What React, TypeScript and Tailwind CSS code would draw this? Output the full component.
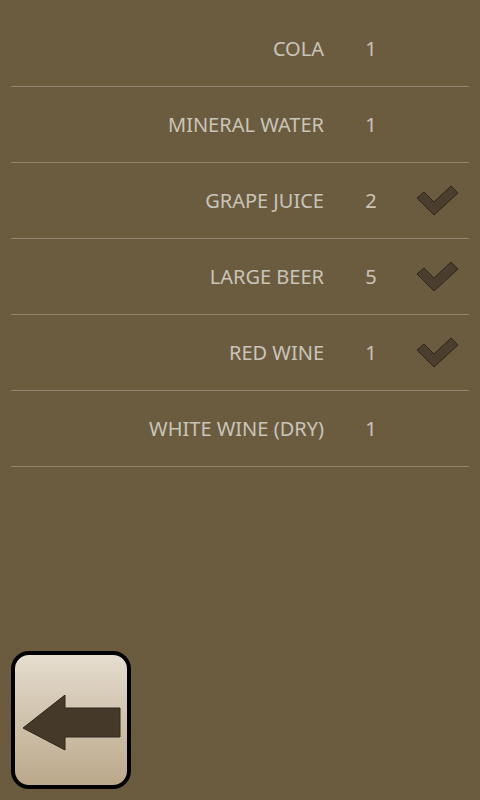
const items = [
  { name: "COLA", qty: 1, done: false },
  { name: "MINERAL WATER", qty: 1, done: false },
  { name: "GRAPE JUICE", qty: 2, done: true },
  { name: "LARGE BEER", qty: 5, done: true },
  { name: "RED WINE", qty: 1, done: true },
  { name: "WHITE WINE (DRY)", qty: 1, done: false },
];

function Check() {
  return (
    <svg width="44" height="32" viewBox="0 0 44 32">
      <path
        d="M1 13 L8 7 L18 17 L35 1 L42 8 L18 30 Z"
        fill="#4a3f2e"
        stroke="#2e261a"
        strokeWidth="1"
        strokeLinejoin="round"
      />
    </svg>
  );
}

function BackArrow() {
  return (
    <svg width="100" height="58" viewBox="0 0 100 58">
      <path
        d="M2 33 L44 0 L44 13 L99 13 L99 42 L44 42 L44 55 Z"
        fill="#45392a"
        stroke="#2e261a"
        strokeWidth="1"
      />
    </svg>
  );
}

export default function App() {
  return (
    <div
      className="flex min-h-screen flex-col bg-[#6b5c3f] text-[#c9c4ba]"
      style={{ fontFamily: '"Noto Sans", "Open Sans", sans-serif' }}
    >
      <ul className="mx-[11px] pt-[11px]">
        {items.map((it) => (
          <li
            key={it.name}
            className="flex h-[76px] items-center border-b border-[#8f8470] text-[20px]"
          >
            <span className="w-[313px] text-right">{it.name}</span>
            <span className="w-[94px] text-center">{it.qty}</span>
            <span className="flex w-[51px] justify-start">
              {it.done && (
                <span className="-ml-[2px] flex">
                  <Check />
                </span>
              )}
            </span>
          </li>
        ))}
      </ul>
      <div className="mt-auto px-[11px] pb-[11px]">
        <button className="flex h-[138px] w-[120px] items-center justify-center rounded-[18px] border-4 border-black bg-gradient-to-b from-[#e5ddcf] to-[#bba88a] pt-[8px]">
          <BackArrow />
        </button>
      </div>
    </div>
  );
}
